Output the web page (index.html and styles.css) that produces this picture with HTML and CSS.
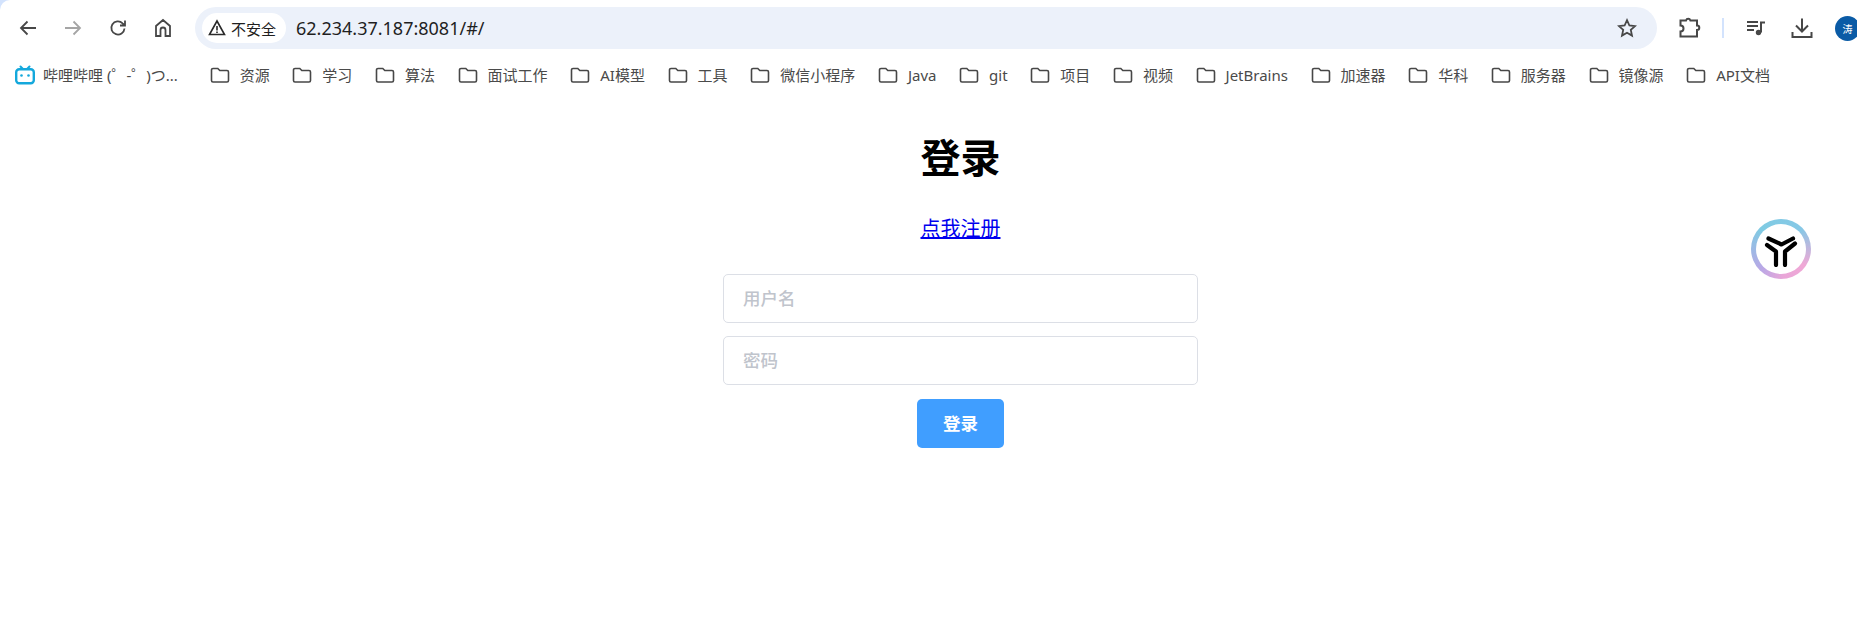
FILE: index.html
```html
<!DOCTYPE html>
<html lang="zh-CN">
<head>
<meta charset="utf-8">
<title>登录</title>
<link rel="stylesheet" href="styles.css">
</head>
<body>
<header class="chrome">
  <div class="toolbar">
    <span class="nav-btn"><svg class="ic" viewBox="0 0 20 20"><path d="M18 10H3M9.500 3.500 3 10l6.500 6.500"/></svg></span>
    <span class="nav-btn nav-btn-off"><svg class="ic" viewBox="0 0 20 20"><path d="M2 10h15M10.500 3.500 17 10l-6.500 6.500"/></svg></span>
    <span class="nav-btn"><svg class="ic" viewBox="0 0 20 20"><path d="M16.500 10.500a6.600 6.600 0 1 1-1.900-5.200L17 7.500M17 2.500v5h-5"/></svg></span>
    <span class="nav-btn"><svg class="ic" viewBox="0 0 20 20"><path d="M3 18V8l7-6 7 6v10h-4.500v-6a2.500 2.500 0 0 0-5 0v6z"/></svg></span>
    <div class="omnibox">
      <span class="chip">
        <svg class="chip-ic" viewBox="0 0 18 18"><path d="M9 2 1.500 15.500h15z"/><path d="M9 7v4.500M9 12.500v1.500"/></svg>
        <span>不安全</span>
      </span>
      <span class="url">62.234.37.187:8081/#/</span>
      <svg class="star" viewBox="0 0 20 20"><path d="m10 2.200 2.400 5.300 5.700.6-4.300 3.800 1.200 5.700L10 14.700l-5 2.900 1.200-5.700-4.300-3.800 5.700-.6z"/></svg>
    </div>
    <div class="actions">
      <span class="act act-ext"><svg class="ic" viewBox="0 0 22 22"><path d="M1.500 3.500H7a2.300 2.300 0 0 1 4.400 0H18V8.500a2.300 2.300 0 0 1 0 4.600V19.500H1.500V14.500a3 3 0 0 0 0-6z"/></svg></span>
      <span class="sep"></span>
      <span class="act act-music"><svg class="ic ic-music" viewBox="0 0 20 20"><path d="M1 4H12M1 8H12M1 12H8M15 14.500V4.500h4"/><circle class="fill" cx="12.500" cy="14.500" r="2.700"/></svg></span>
      <span class="act act-dl"><svg class="ic" viewBox="0 0 22 22"><path d="M11 1.500V14.500M5 8.500 11 14.500l6-6M1.500 15v5h19v-5"/></svg></span>
      <span class="avatar">涛</span>
    </div>
  </div>
  <nav class="bookmarks">
    <a class="bm bm-first"><svg class="bili" viewBox="0 0 20 20"><path class="bili-ears" d="M5.500 1.500 8 4M14.500 1.500 12 4"/><rect class="bili-head" x="1.200" y="4.200" width="17.600" height="14" rx="3"/><circle class="bili-eye" cx="6.500" cy="10.500" r="1.300"/><circle class="bili-eye" cx="13.500" cy="10.500" r="1.300"/></svg><span class="bm-first-text">哔哩哔哩 (゜-゜)つ...</span></a>
    <a class="bm"><svg class="folder" viewBox="0 0 20 16"><path d="M1.500 3A1.500 1.500 0 0 1 3 1.500h4.800L9.800 3.500H17A1.500 1.500 0 0 1 18.500 5v8.500A1.500 1.500 0 0 1 17 15H3a1.500 1.500 0 0 1-1.500-1.500z"/></svg><span>资源</span></a>
    <a class="bm"><svg class="folder" viewBox="0 0 20 16"><path d="M1.500 3A1.500 1.500 0 0 1 3 1.500h4.800L9.800 3.500H17A1.500 1.500 0 0 1 18.500 5v8.500A1.500 1.500 0 0 1 17 15H3a1.500 1.500 0 0 1-1.500-1.500z"/></svg><span>学习</span></a>
    <a class="bm"><svg class="folder" viewBox="0 0 20 16"><path d="M1.500 3A1.500 1.500 0 0 1 3 1.500h4.800L9.800 3.500H17A1.500 1.500 0 0 1 18.500 5v8.500A1.500 1.500 0 0 1 17 15H3a1.500 1.500 0 0 1-1.500-1.500z"/></svg><span>算法</span></a>
    <a class="bm"><svg class="folder" viewBox="0 0 20 16"><path d="M1.500 3A1.500 1.500 0 0 1 3 1.500h4.800L9.800 3.500H17A1.500 1.500 0 0 1 18.500 5v8.500A1.500 1.500 0 0 1 17 15H3a1.500 1.500 0 0 1-1.500-1.500z"/></svg><span>面试工作</span></a>
    <a class="bm"><svg class="folder" viewBox="0 0 20 16"><path d="M1.500 3A1.500 1.500 0 0 1 3 1.500h4.800L9.800 3.500H17A1.500 1.500 0 0 1 18.500 5v8.500A1.500 1.500 0 0 1 17 15H3a1.500 1.500 0 0 1-1.500-1.500z"/></svg><span>AI模型</span></a>
    <a class="bm"><svg class="folder" viewBox="0 0 20 16"><path d="M1.500 3A1.500 1.500 0 0 1 3 1.500h4.800L9.800 3.500H17A1.500 1.500 0 0 1 18.500 5v8.500A1.500 1.500 0 0 1 17 15H3a1.500 1.500 0 0 1-1.500-1.500z"/></svg><span>工具</span></a>
    <a class="bm"><svg class="folder" viewBox="0 0 20 16"><path d="M1.500 3A1.500 1.500 0 0 1 3 1.500h4.800L9.800 3.500H17A1.500 1.500 0 0 1 18.500 5v8.500A1.500 1.500 0 0 1 17 15H3a1.500 1.500 0 0 1-1.500-1.500z"/></svg><span>微信小程序</span></a>
    <a class="bm"><svg class="folder" viewBox="0 0 20 16"><path d="M1.500 3A1.500 1.500 0 0 1 3 1.500h4.800L9.800 3.500H17A1.500 1.500 0 0 1 18.500 5v8.500A1.500 1.500 0 0 1 17 15H3a1.500 1.500 0 0 1-1.500-1.500z"/></svg><span>Java</span></a>
    <a class="bm"><svg class="folder" viewBox="0 0 20 16"><path d="M1.500 3A1.500 1.500 0 0 1 3 1.500h4.800L9.800 3.500H17A1.500 1.500 0 0 1 18.500 5v8.500A1.500 1.500 0 0 1 17 15H3a1.500 1.500 0 0 1-1.500-1.500z"/></svg><span>git</span></a>
    <a class="bm"><svg class="folder" viewBox="0 0 20 16"><path d="M1.500 3A1.500 1.500 0 0 1 3 1.500h4.800L9.800 3.500H17A1.500 1.500 0 0 1 18.500 5v8.500A1.500 1.500 0 0 1 17 15H3a1.500 1.500 0 0 1-1.500-1.500z"/></svg><span>项目</span></a>
    <a class="bm"><svg class="folder" viewBox="0 0 20 16"><path d="M1.500 3A1.500 1.500 0 0 1 3 1.500h4.800L9.800 3.500H17A1.500 1.500 0 0 1 18.500 5v8.500A1.500 1.500 0 0 1 17 15H3a1.500 1.500 0 0 1-1.500-1.500z"/></svg><span>视频</span></a>
    <a class="bm"><svg class="folder" viewBox="0 0 20 16"><path d="M1.500 3A1.500 1.500 0 0 1 3 1.500h4.800L9.800 3.500H17A1.500 1.500 0 0 1 18.500 5v8.500A1.500 1.500 0 0 1 17 15H3a1.500 1.500 0 0 1-1.500-1.500z"/></svg><span>JetBrains</span></a>
    <a class="bm"><svg class="folder" viewBox="0 0 20 16"><path d="M1.500 3A1.500 1.500 0 0 1 3 1.500h4.800L9.800 3.500H17A1.500 1.500 0 0 1 18.500 5v8.500A1.500 1.500 0 0 1 17 15H3a1.500 1.500 0 0 1-1.500-1.500z"/></svg><span>加速器</span></a>
    <a class="bm"><svg class="folder" viewBox="0 0 20 16"><path d="M1.500 3A1.500 1.500 0 0 1 3 1.500h4.800L9.800 3.500H17A1.500 1.500 0 0 1 18.500 5v8.500A1.500 1.500 0 0 1 17 15H3a1.500 1.500 0 0 1-1.500-1.500z"/></svg><span>华科</span></a>
    <a class="bm"><svg class="folder" viewBox="0 0 20 16"><path d="M1.500 3A1.500 1.500 0 0 1 3 1.500h4.800L9.800 3.500H17A1.500 1.500 0 0 1 18.500 5v8.500A1.500 1.500 0 0 1 17 15H3a1.500 1.500 0 0 1-1.500-1.500z"/></svg><span>服务器</span></a>
    <a class="bm"><svg class="folder" viewBox="0 0 20 16"><path d="M1.500 3A1.500 1.500 0 0 1 3 1.500h4.800L9.800 3.500H17A1.500 1.500 0 0 1 18.500 5v8.500A1.500 1.500 0 0 1 17 15H3a1.500 1.500 0 0 1-1.500-1.500z"/></svg><span>镜像源</span></a>
    <a class="bm"><svg class="folder" viewBox="0 0 20 16"><path d="M1.500 3A1.500 1.500 0 0 1 3 1.500h4.800L9.800 3.500H17A1.500 1.500 0 0 1 18.500 5v8.500A1.500 1.500 0 0 1 17 15H3a1.500 1.500 0 0 1-1.500-1.500z"/></svg><span>API文档</span></a>
  </nav>
</header>
<main class="page">
  <h1 class="title">登录</h1>
  <a class="reg-link" href="#">点我注册</a>
  <form class="login-form">
    <input class="field" type="text" placeholder="用户名">
    <input class="field" type="password" placeholder="密码">
    <button class="submit" type="button">登录</button>
  </form>
</main>
<div class="float-logo">
  <svg class="float-mark" viewBox="0 0 36 36"><path d="M5.500 7.500 18.500 13.500 30 7.500M4 14l9 6.500V34M32 12.500l-10 8V34"/></svg>
</div>
</body>
</html>
```
FILE: styles.css
```css
* { box-sizing: border-box; }
html { margin: 0; height: 100%; overflow: hidden; background: #d3e3fd; }
body { margin: 0; height: 100%; overflow: hidden; background: #fff; border-top-left-radius: 10px; font-family: "Noto Sans", "Noto Sans CJK SC", sans-serif; position: relative; }

.chrome { height: 93px; }
.toolbar { display: flex; align-items: center; height: 56px; padding: 0 0 0 5px; }
.nav-btn { width: 45px; height: 36px; display: flex; align-items: center; justify-content: center; flex: none; color: #474747; }
.nav-btn-off { color: #a5a5a5; }
.ic { width: 20px; height: 20px; fill: none; stroke: currentColor; stroke-width: 1.8; }
.ic .fill { fill: currentColor; stroke: none; }

.omnibox { flex: 1; margin: 0 0 0 10px; height: 42px; border-radius: 21px; background: #ecf1fa; display: flex; align-items: center; padding: 0 20px 0 7px; }
.chip { height: 30px; width: 84px; border-radius: 15px; background: #fff; display: flex; align-items: center; gap: 5px; padding-left: 6px; font-size: 15px; color: #1f1f1f; flex: none; font-family: "Noto Sans CJK SC", sans-serif; }
.chip-ic { width: 18px; height: 18px; fill: none; stroke: #2a2a2a; stroke-width: 1.6; flex: none; }
.url { margin-left: 10px; font-size: 18px; color: #1f1f1f; flex: 1; font-family: "Noto Sans", sans-serif; }
.star { width: 20px; height: 20px; fill: none; stroke: #474747; stroke-width: 1.8; flex: none; }

.actions { flex: none; width: 200px; display: flex; align-items: center; }
.act { width: 36px; height: 36px; flex: none; display: flex; align-items: center; justify-content: center; color: #474747; }
.act .ic { width: 22px; height: 22px; stroke-width: 2; }
.act .ic-music { width: 20px; height: 20px; }
.act-ext { margin-left: 15px; }
.sep { width: 2px; height: 20px; background: #d3e3fd; flex: none; margin-left: 14px; }
.act-music { margin-left: 14px; }
.act-dl { margin-left: 10px; }
.avatar { width: 25px; height: 25px; border-radius: 50%; background: #0a5ba6; color: #fff; font-size: 10px; display: flex; align-items: center; justify-content: center; margin-left: 15px; flex: none; font-family: "Noto Sans CJK SC", sans-serif; }

.bookmarks { display: flex; align-items: center; height: 37px; padding-left: 15px; font-size: 15px; color: #4a4a4a; white-space: nowrap; font-family: "Noto Sans", "Noto Sans CJK SC", sans-serif; }
.bm { display: flex; align-items: center; gap: 10px; padding: 0 11px 0 11.650px; flex: none; }
.bm-first { padding: 0 18px 0 0; gap: 8px; }
.bm-first-text { width: 137px; }
.bili { width: 20px; height: 20px; flex: none; }
.bili-ears { fill: none; stroke: #14a8dc; stroke-width: 2; stroke-linecap: round; }
.bili-head { fill: none; stroke: #14a8dc; stroke-width: 2.400; }
.bili-eye { fill: #14a8dc; }
.folder { width: 20px; height: 16px; fill: none; stroke: #474747; stroke-width: 1.600; flex: none; }

.page { display: flex; flex-direction: column; align-items: center; padding-left: 64px; font-family: "Noto Sans CJK SC", sans-serif; }
.title { margin: 38px 0 0; font-size: 40px; line-height: 50px; font-weight: 700; color: #000; }
.reg-link { margin-top: 32px; font-size: 20px; line-height: 30px; color: #00e; text-decoration: underline; }
.login-form { margin-top: 31px; width: 475px; display: flex; flex-direction: column; align-items: center; gap: 13px; }
.field { width: 100%; height: 49px; border: 1px solid #dcdfe6; border-radius: 5px; padding: 0 19px 2px; font-size: 17.500px; font-family: inherit; background: #fff; outline: none; }
.field::placeholder { color: #c0c4cc; font-weight: 500; }
.submit { width: 87px; height: 49px; margin-top: 1px; border: 0; border-radius: 5px; background: #409eff; color: #fff; font-size: 17.500px; font-weight: 700; font-family: inherit; padding: 0 0 2px; }

.float-logo { position: absolute; left: 1751px; top: 219px; width: 60px; height: 60px; border-radius: 50%; background: conic-gradient(from 315deg, #7fcbe3 0deg, #86c8e6 90deg, #f0a8d6 170deg, #e9a6d8 220deg, #b9a8e6 270deg, #7fcbe3 360deg); display: flex; align-items: center; justify-content: center; }
.float-logo::before { content: ""; position: absolute; inset: 5px; border-radius: 50%; background: #fff; }
.float-mark { position: relative; width: 36px; height: 36px; fill: none; stroke: #000; stroke-width: 4.200; stroke-linecap: round; stroke-linejoin: round; }
```
